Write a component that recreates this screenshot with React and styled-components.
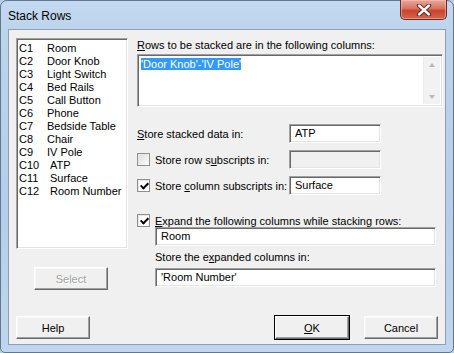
import React from "react";
import styled, { createGlobalStyle } from "styled-components";

const GlobalStyle = createGlobalStyle`
  html, body {
    margin: 0;
    padding: 0;
    background: #b8cfe8;
  }
  * {
    box-sizing: border-box;
  }
`;

const columns = [
  ["C1", "Room"],
  ["C2", "Door Knob"],
  ["C3", "Light Switch"],
  ["C4", "Bed Rails"],
  ["C5", "Call Button"],
  ["C6", "Phone"],
  ["C7", "Bedside Table"],
  ["C8", "Chair"],
  ["C9", "IV Pole"],
  ["C10", "ATP"],
  ["C11", "Surface"],
  ["C12", "Room Number"],
];

const App = () => {
  return (
    <>
      <GlobalStyle />
      <Window>
        <TitleBar>
          <Title>Stack Rows</Title>
          <CloseButton aria-label="Close">
            <svg width="16" height="12" viewBox="0 0 16 12">
              <path
                d="M3 1.5 L13 10.5 M13 1.5 L3 10.5"
                stroke="#4a1a14"
                strokeWidth="4.2"
                strokeLinecap="round"
              />
              <path
                d="M3 1.5 L13 10.5 M13 1.5 L3 10.5"
                stroke="#ffffff"
                strokeWidth="2.4"
                strokeLinecap="round"
              />
            </svg>
          </CloseButton>
        </TitleBar>
        <Client>
          <Main>
            <LeftColumn>
              <ColumnList>
                {columns.map(([code, name]) => (
                  <ListItem key={code}>
                    <Code wide={code.length > 2}>{code}</Code>
                    <span>{name}</span>
                  </ListItem>
                ))}
              </ColumnList>
              <SelectButton disabled>Select</SelectButton>
            </LeftColumn>
            <RightColumn>
              <Label>
                <u>R</u>ows to be stacked are in the following columns:
              </Label>
              <TextArea>
                <TextAreaBody>
                  <Selected>'Door Knob'-'IV Pole'</Selected>
                </TextAreaBody>
                <ScrollBar>
                  <Arrow up />
                  <Arrow />
                </ScrollBar>
              </TextArea>

              <FieldRow top={17}>
                <FieldLabel>
                  <u>S</u>tore stacked data in:
                </FieldLabel>
                <Input>ATP</Input>
              </FieldRow>
              <FieldRow top={7}>
                <CheckLabel>
                  <CheckBox />
                  <span>
                    Store row s<u>u</u>bscripts in:
                  </span>
                </CheckLabel>
                <Input disabled />
              </FieldRow>
              <FieldRow top={7}>
                <CheckLabel>
                  <CheckBox checked />
                  <span>
                    Store <u>c</u>olumn subscripts in:
                  </span>
                </CheckLabel>
                <Input>Surface</Input>
              </FieldRow>

              <ExpandGroup>
                <CheckLabel>
                  <CheckBox checked />
                  <span>
                    <u>E</u>xpand the following columns while stacking rows:
                  </span>
                </CheckLabel>
                <SubGroup>
                  <WideInput>Room</WideInput>
                  <SubLabel>
                    Store the e<u>x</u>panded columns in:
                  </SubLabel>
                  <WideInput>'Room Number'</WideInput>
                </SubGroup>
              </ExpandGroup>
            </RightColumn>
          </Main>
          <Footer>
            <Button>Help</Button>
            <Spacer />
            <Button isDefault>
              <u>O</u>K
            </Button>
            <Button>Cancel</Button>
          </Footer>
        </Client>
      </Window>
    </>
  );
};

const Window = styled.div`
  width: 454px;
  height: 353px;
  padding: 0 7px 7px 7px;
  border: 1px solid #62768f;
  border-radius: 7px 7px 5px 5px;
  background: linear-gradient(
    180deg,
    #c3d9f0 0%,
    #bcd3ec 10%,
    #b5cde8 60%,
    #c0d6ee 100%
  );
  display: flex;
  flex-direction: column;
  font-family: "Liberation Sans", Arial, sans-serif;
  font-size: 11px;
  color: #000;
`;

const TitleBar = styled.div`
  height: 28px;
  display: flex;
  align-items: flex-start;
  justify-content: space-between;
`;

const Title = styled.div`
  font-family: "Liberation Sans", Arial, sans-serif;
  font-size: 12px;
  padding-top: 8px;
  color: #000;
`;

const CloseButton = styled.div`
  width: 47px;
  height: 20px;
  margin-top: -1px;
  margin-right: -1px;
  display: flex;
  align-items: center;
  justify-content: center;
  border: 1px solid #6b2a20;
  border-top: none;
  border-radius: 0 0 5px 5px;
  background: linear-gradient(
    180deg,
    #e9a99c 0%,
    #d9715f 45%,
    #c9452f 55%,
    #d4654c 100%
  );
  box-shadow: inset 0 0 0 1px rgba(255, 200, 190, 0.5);
`;

const Client = styled.div`
  flex: 1;
  background: #f0f0f0;
  border: 1px solid #8c9fb6;
  padding: 8px 7px 5px 7px;
  display: flex;
  flex-direction: column;
`;

const Main = styled.div`
  display: grid;
  grid-template-columns: 112px 306px;
  column-gap: 9px;
`;

const LeftColumn = styled.div`
  display: flex;
  flex-direction: column;
`;

const sunken = `
  border: 1px solid;
  border-color: #a0a0a0 #ffffff #ffffff #a0a0a0;
  box-shadow: inset 1px 1px 0 #696969, inset -1px -1px 0 #e3e3e3;
`;

const ColumnList = styled.div`
  height: 211px;
  background: #fff;
  ${sunken}
  padding: 3px 2px;
`;

const ListItem = styled.div`
  display: flex;
  height: 13px;
  line-height: 13px;
  white-space: nowrap;
`;

const Code = styled.span`
  width: ${(p) => (p.wide ? "31px" : "28px")};
  flex-shrink: 0;
`;

const Button = styled.div`
  width: 74px;
  height: 23px;
  display: flex;
  align-items: center;
  justify-content: center;
  background: #f0f0f0;
  border: 1px solid;
  border-color: #ffffff #696969 #696969 #ffffff;
  box-shadow: ${(p) =>
    p.isDefault
      ? "0 0 0 1px #000, inset -1px -1px 0 #a0a0a0"
      : "inset -1px -1px 0 #a0a0a0, inset 1px 1px 0 #f8f8f8"};
  color: #000;
  & + & {
    margin-left: 15px;
  }
`;

const SelectButton = styled(Button)`
  margin-top: 18px;
  margin-left: 18px;
  color: #a0a0a0;
  text-shadow: 1px 1px 0 #fff;
`;

const RightColumn = styled.div`
  display: flex;
  flex-direction: column;
  padding-top: 1px;
`;

const Label = styled.div`
  line-height: 13px;
  white-space: nowrap;
`;

const TextArea = styled.div`
  margin-top: 2px;
  height: 53px;
  display: flex;
  background: #fff;
  ${sunken}
  padding: 2px;
`;

const TextAreaBody = styled.div`
  flex: 1;
  padding: 1px 1px;
  line-height: 13px;
`;

const Selected = styled.span`
  background: #3399ff;
  color: #fff;
`;

const ScrollBar = styled.div`
  width: 17px;
  background: #f2f2f2;
  border-left: 1px solid #ececec;
  display: flex;
  flex-direction: column;
  justify-content: space-between;
  align-items: center;
  padding: 6px 0 5px;
`;

const Arrow = styled.div`
  width: 0;
  height: 0;
  border-left: 3.5px solid transparent;
  border-right: 3.5px solid transparent;
  ${(p) =>
    p.up
      ? "border-bottom: 4px solid #b9b9b9;"
      : "border-top: 4px solid #b9b9b9;"}
`;

const FieldRow = styled.div`
  display: flex;
  align-items: center;
  margin-top: ${(p) => p.top}px;
  height: 19px;
`;

const FieldLabel = styled.div`
  width: 152px;
  white-space: nowrap;
`;

const CheckLabel = styled.label`
  width: 152px;
  display: flex;
  align-items: center;
  white-space: nowrap;
`;

const CheckBox = styled.span`
  width: 13px;
  height: 13px;
  margin-right: 5px;
  flex-shrink: 0;
  border: 1px solid #8e8f8f;
  background: ${(p) =>
    p.checked ? "#fff" : "linear-gradient(135deg, #dcdcdc, #fdfdfd)"};
  box-shadow: inset 1px 1px 0 #e8e8e8;
  position: relative;
  &::after {
    content: "";
    display: ${(p) => (p.checked ? "block" : "none")};
    position: absolute;
    left: 2px;
    top: 0px;
    width: 6px;
    height: 3px;
    border-left: 2px solid #000;
    border-bottom: 2px solid #000;
    transform: translate(0.5px, 2.5px) rotate(-45deg);
  }
`;

const Input = styled.div`
  width: 92px;
  height: 19px;
  background: ${(p) => (p.disabled ? "#f0f0f0" : "#fff")};
  ${sunken}
  padding: 2px 5px 0;
  line-height: 13px;
  white-space: nowrap;
`;

const ExpandGroup = styled.div`
  display: flex;
  flex-direction: column;
  margin-top: 19px;
`;

const SubGroup = styled.div`
  display: flex;
  flex-direction: column;
  padding-left: 18px;
  width: 299px;
`;

const WideInput = styled(Input)`
  width: 281px;
`;

const SubLabel = styled.div`
  margin-top: 5px;
  margin-bottom: 4px;
  line-height: 13px;
`;

const Footer = styled.div`
  margin-top: auto;
  display: flex;
  align-items: center;
  width: 422px;
`;

const Spacer = styled.div`
  flex: 1;
`;

export default App;
